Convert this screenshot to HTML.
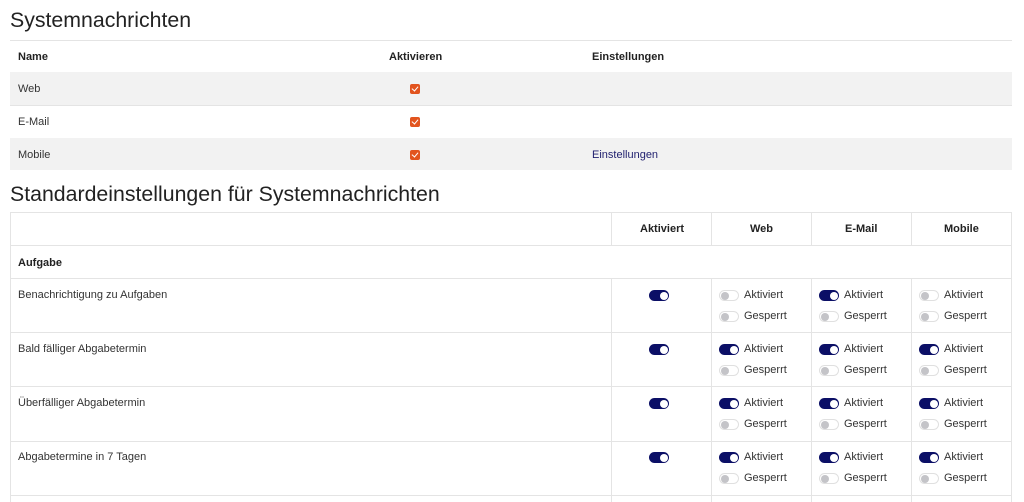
<!DOCTYPE html>
<html><head><meta charset="utf-8"><style>
*{box-sizing:border-box;margin:0;padding:0}
body{width:1024px;height:502px;overflow:hidden;background:#fff;font-family:"Liberation Sans",sans-serif;color:#333;position:relative;font-size:11px}
.a{position:absolute;white-space:nowrap}
h1{position:absolute;font-weight:400;font-size:21.3px;color:#222;left:10px}
.b{font-weight:bold;color:#222}
.cb{position:absolute;width:10px;height:10px;background:#e2541e;border-radius:2px}
.cb:after{content:"";position:absolute;left:3px;top:1px;width:3px;height:5px;border:solid #fff;border-width:0 1.5px 1.5px 0;transform:rotate(40deg)}
.t{position:absolute;width:20px;height:11px;border-radius:6px}
.on{background:#0b0f66}
.on:after{content:"";position:absolute;right:1.5px;top:1.5px;width:8px;height:8px;border-radius:50%;background:#fff}
.off{background:#fff;border:1px solid #e0e0e0}
.off:after{content:"";position:absolute;left:0.5px;top:0.5px;width:8px;height:8px;border-radius:50%;background:#c4c4c8}
.hl{position:absolute;height:1px;background:#e4e4e4}
.vl{position:absolute;width:1px;background:#e4e4e4}
</style></head><body>
<h1 style="top:8px">Systemnachrichten</h1>
<div class="hl" style="left:10px;top:40px;width:1002px"></div>
<div class="a b" style="left:18px;top:51px">Name</div>
<div class="a b" style="left:389px;top:51px">Aktivieren</div>
<div class="a b" style="left:592px;top:51px">Einstellungen</div>
<div class="a" style="left:10px;top:72px;width:1002px;height:33px;background:#f2f2f2"></div>
<div class="hl" style="left:10px;top:105px;width:1002px"></div>
<div class="a" style="left:10px;top:138px;width:1002px;height:32px;background:#f2f2f2"></div>
<div class="a" style="left:18px;top:83px">Web</div>
<div class="a" style="left:18px;top:116px">E-Mail</div>
<div class="a" style="left:18px;top:149px">Mobile</div>
<div class="cb" style="left:410px;top:84px"></div>
<div class="cb" style="left:410px;top:117px"></div>
<div class="cb" style="left:410px;top:150px"></div>
<div class="a" style="left:592px;top:149px;color:#1f1f6e">Einstellungen</div>

<h1 style="top:182px">Standardeinstellungen für Systemnachrichten</h1>
<div class="a" style="left:10px;top:212px;width:1002px;height:290px;border:1px solid #e4e4e4;border-bottom:none"></div>
<div class="hl" style="left:10px;top:245px;width:1002px"></div>
<div class="hl" style="left:10px;top:278px;width:1002px"></div>
<div class="hl" style="left:10px;top:332px;width:1002px"></div>
<div class="hl" style="left:10px;top:386px;width:1002px"></div>
<div class="hl" style="left:10px;top:441px;width:1002px"></div>
<div class="hl" style="left:10px;top:495px;width:1002px"></div>
<div class="vl" style="left:611px;top:212px;height:33px"></div>
<div class="vl" style="left:711px;top:212px;height:33px"></div>
<div class="vl" style="left:811px;top:212px;height:33px"></div>
<div class="vl" style="left:911px;top:212px;height:33px"></div>
<div class="vl" style="left:611px;top:278px;height:224px"></div>
<div class="vl" style="left:711px;top:278px;height:224px"></div>
<div class="vl" style="left:811px;top:278px;height:224px"></div>
<div class="vl" style="left:911px;top:278px;height:224px"></div>
<div class="a b" style="left:640px;top:223px">Aktiviert</div>
<div class="a b" style="left:750px;top:223px">Web</div>
<div class="a b" style="left:845px;top:223px">E-Mail</div>
<div class="a b" style="left:944px;top:223px">Mobile</div>
<div class="a b" style="left:18px;top:257px">Aufgabe</div>

<div class="a" style="left:18px;top:289px">Benachrichtigung zu Aufgaben</div>
<div class="a" style="left:18px;top:343px">Bald fälliger Abgabetermin</div>
<div class="a" style="left:18px;top:397px">Überfälliger Abgabetermin</div>
<div class="a" style="left:18px;top:451px">Abgabetermine in 7 Tagen</div>

<div class="t on" style="left:649px;top:290px"></div>
<div class="t off" style="left:719px;top:290px"></div><div class="a" style="left:744px;top:289px">Aktiviert</div>
<div class="t off" style="left:719px;top:311px"></div><div class="a" style="left:744px;top:310px">Gesperrt</div>
<div class="t on" style="left:819px;top:290px"></div><div class="a" style="left:844px;top:289px">Aktiviert</div>
<div class="t off" style="left:819px;top:311px"></div><div class="a" style="left:844px;top:310px">Gesperrt</div>
<div class="t off" style="left:919px;top:290px"></div><div class="a" style="left:944px;top:289px">Aktiviert</div>
<div class="t off" style="left:919px;top:311px"></div><div class="a" style="left:944px;top:310px">Gesperrt</div>

<div class="t on" style="left:649px;top:344px"></div>
<div class="t on" style="left:719px;top:344px"></div><div class="a" style="left:744px;top:343px">Aktiviert</div>
<div class="t off" style="left:719px;top:365px"></div><div class="a" style="left:744px;top:364px">Gesperrt</div>
<div class="t on" style="left:819px;top:344px"></div><div class="a" style="left:844px;top:343px">Aktiviert</div>
<div class="t off" style="left:819px;top:365px"></div><div class="a" style="left:844px;top:364px">Gesperrt</div>
<div class="t on" style="left:919px;top:344px"></div><div class="a" style="left:944px;top:343px">Aktiviert</div>
<div class="t off" style="left:919px;top:365px"></div><div class="a" style="left:944px;top:364px">Gesperrt</div>

<div class="t on" style="left:649px;top:398px"></div>
<div class="t on" style="left:719px;top:398px"></div><div class="a" style="left:744px;top:397px">Aktiviert</div>
<div class="t off" style="left:719px;top:419px"></div><div class="a" style="left:744px;top:418px">Gesperrt</div>
<div class="t on" style="left:819px;top:398px"></div><div class="a" style="left:844px;top:397px">Aktiviert</div>
<div class="t off" style="left:819px;top:419px"></div><div class="a" style="left:844px;top:418px">Gesperrt</div>
<div class="t on" style="left:919px;top:398px"></div><div class="a" style="left:944px;top:397px">Aktiviert</div>
<div class="t off" style="left:919px;top:419px"></div><div class="a" style="left:944px;top:418px">Gesperrt</div>

<div class="t on" style="left:649px;top:452px"></div>
<div class="t on" style="left:719px;top:452px"></div><div class="a" style="left:744px;top:451px">Aktiviert</div>
<div class="t off" style="left:719px;top:473px"></div><div class="a" style="left:744px;top:472px">Gesperrt</div>
<div class="t on" style="left:819px;top:452px"></div><div class="a" style="left:844px;top:451px">Aktiviert</div>
<div class="t off" style="left:819px;top:473px"></div><div class="a" style="left:844px;top:472px">Gesperrt</div>
<div class="t on" style="left:919px;top:452px"></div><div class="a" style="left:944px;top:451px">Aktiviert</div>
<div class="t off" style="left:919px;top:473px"></div><div class="a" style="left:944px;top:472px">Gesperrt</div>
</body></html>
